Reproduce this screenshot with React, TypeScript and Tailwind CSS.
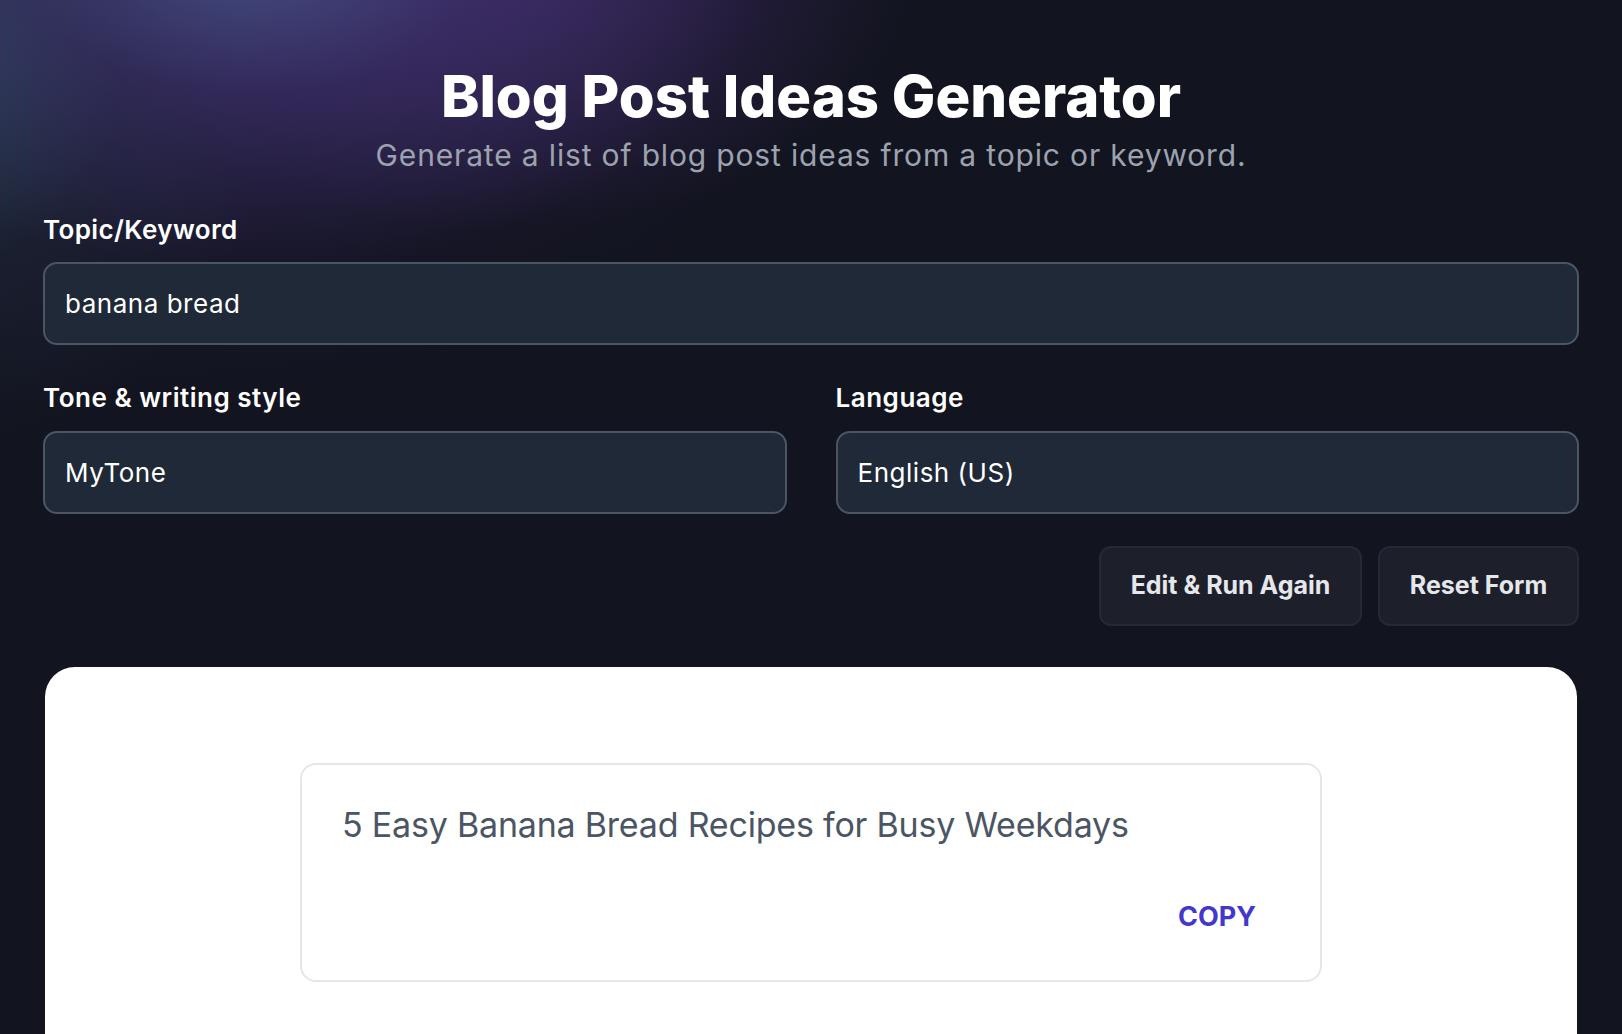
export default function App() {
  return (
    <div className="min-h-screen w-full bg-[#12141f] bg-[image:radial-gradient(ellipse_520px_320px_at_250px_-50px,rgba(72,86,140,0.85)_0%,rgba(62,50,112,0.55)_45%,rgba(18,20,31,0)_100%),radial-gradient(ellipse_420px_260px_at_500px_-30px,rgba(78,48,122,0.6)_0%,rgba(18,20,31,0)_100%),radial-gradient(ellipse_340px_420px_at_-60px_40px,rgba(42,74,88,0.9)_0%,rgba(30,44,58,0.4)_55%,rgba(18,20,31,0)_100%),radial-gradient(ellipse_700px_420px_at_150px_0px,rgba(40,28,70,0.6)_0%,rgba(18,20,31,0)_100%)] bg-no-repeat font-['Inter',sans-serif] pb-[200px]">
      <div className="px-[43px] pt-[67px]">
        <h1 className="text-center text-[58px] leading-none font-extrabold tracking-normal text-white">
          Blog Post Ideas Generator
        </h1>
        <p className="mt-[15px] text-center text-[30px] leading-none tracking-[0.028em] text-[#9ca3af]">
          Generate a list of blog post ideas from a topic or keyword.
        </p>

        <div className="mt-[47px]">
          <label className="block text-[26px] leading-none font-semibold tracking-[0.015em] text-white">Topic/Keyword</label>
          <div className="mt-[19px] flex h-[83px] items-center rounded-[14px] border-2 border-[#4b5563] bg-[#1f2937] px-[20px] text-[26px] tracking-[0.02em] text-white">
            banana bread
          </div>
        </div>

        <div className="mt-[40px] grid grid-cols-2 gap-[49px]">
          <div>
            <label className="block text-[26px] leading-none font-semibold tracking-[0.02em] text-white">Tone &amp; writing style</label>
            <div className="mt-[20px] flex h-[83px] items-center rounded-[14px] border-2 border-[#4b5563] bg-[#1f2937] px-[20px] text-[26px] tracking-[0.02em] text-white">
              MyTone
            </div>
          </div>
          <div>
            <label className="block text-[26px] leading-none font-semibold tracking-[0.02em] text-white">Language</label>
            <div className="mt-[20px] flex h-[83px] items-center rounded-[14px] border-2 border-[#4b5563] bg-[#1f2937] px-[20px] text-[26px] tracking-[0.02em] text-white">
              English (US)
            </div>
          </div>
        </div>

        <div className="mt-[32px] flex justify-end gap-[16px]">
          <button className="h-[80px] w-[263px] rounded-[12px] border-2 border-[#252935] bg-[#1d202b] text-[25px] font-bold text-[#e5e7eb]">
            Edit &amp; Run Again
          </button>
          <button className="h-[80px] w-[201px] rounded-[12px] border-2 border-[#252935] bg-[#1d202b] text-[25px] font-bold text-[#e5e7eb]">
            Reset Form
          </button>
        </div>

        <div className="mx-[2px] mt-[41px] rounded-[30px] bg-white pt-[96px] pb-[120px]">
          <div className="mx-auto flex h-[219px] w-[1022px] flex-col rounded-[16px] border-2 border-[#e5e7eb] pt-[43px] pl-[40px] pr-[64px]">
            <p className="text-[34px] leading-none tracking-[-0.006em] text-[#4b5563]">5 Easy Banana Bread Recipes for Busy Weekdays</p>
            <div className="mt-[61px] flex justify-end">
              <button className="text-[27px] leading-none font-bold text-[#4338ca]">COPY</button>
            </div>
          </div>
        </div>
      </div>
    </div>
  );
}
